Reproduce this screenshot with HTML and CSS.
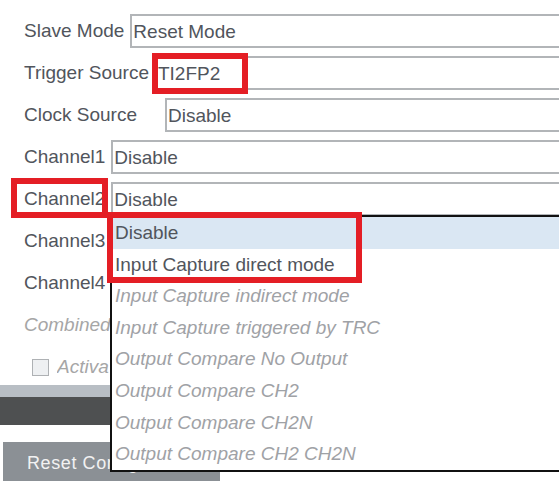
FILE: index.html
```html
<!DOCTYPE html>
<html>
<head>
<meta charset="utf-8">
<link rel="stylesheet" href="styles.css">
</head>
<body>
<div class="page">
  <div class="form">
    <div class="row"><span class="label">Slave Mode</span><div class="select">Reset Mode</div></div>
    <div class="row"><span class="label">Trigger Source</span><div class="select">TI2FP2</div></div>
    <div class="row"><span class="label">Clock Source</span><div class="select select--wide">Disable</div></div>
    <div class="row"><span class="label">Channel1</span><div class="select">Disable</div></div>
    <div class="row"><span class="label">Channel2</span><div class="select">Disable</div></div>
    <div class="row row--under"><span class="label label--clip">Channel3</span><div class="select"></div></div>
    <div class="row row--under"><span class="label label--clip">Channel4</span><div class="select"></div></div>
    <div class="row row--under"><span class="label label--off label--clip">Combined Channels</span><div class="select select--off"></div></div>
    <div class="row row--check"><span class="checkbox"></span><span class="label label--off label--clip-check">Activate-Clock</span></div>
  </div>
  <div class="strip"></div>
  <div class="bar"></div>
  <div class="actions"><div class="button">Reset Configuration</div></div>

  <ul class="dropdown">
    <li class="item item--selected">Disable</li>
    <li class="item">Input Capture direct mode</li>
    <li class="item item--off">Input Capture indirect mode</li>
    <li class="item item--off">Input Capture triggered by TRC</li>
    <li class="item item--off">Output Compare No Output</li>
    <li class="item item--off">Output Compare CH2</li>
    <li class="item item--off">Output Compare CH2N</li>
    <li class="item item--off">Output Compare CH2 CH2N</li>
  </ul>

  <div class="mark mark--trigger"></div>
  <div class="mark mark--channel"></div>
  <div class="mark mark--list"></div>
</div>
</body>
</html>
```
FILE: styles.css
```css
html, body {
  margin: 0;
  padding: 0;
  background: #ffffff;
  overflow: hidden;
}

.page {
  position: relative;
  width: 640px;
  height: 481px;
  font-family: "Liberation Sans", Arial, sans-serif;
  font-size: 19px;
  color: #51555c;
}

.form {
  display: flex;
  flex-direction: column;
  gap: 8px;
  padding-top: 14px;
}

.row {
  display: flex;
  align-items: center;
  gap: 6px;
  height: 34px;
  padding-left: 24px;
}

.label {
  white-space: nowrap;
  flex: none;
}

.label--clip {
  width: 86px;
  overflow: hidden;
}

.label--clip-check {
  width: 52px;
  overflow: hidden;
}

.label--off {
  color: #a6a6a6;
  font-style: italic;
}

.select {
  flex: 1;
  height: 34px;
  box-sizing: border-box;
  border: 2px solid #b2b5b8;
  border-right: none;
  padding-left: 1px;
  display: flex;
  align-items: center;
  line-height: 1;
}

.row--under .select {
  margin-left: 0;
}

.select--wide {
  margin-left: 22px;
}

.select--off {
  color: #a6a6a6;
}

.row--check {
  padding-left: 32px;
  gap: 8px;
}

.checkbox {
  width: 17px;
  height: 17px;
  box-sizing: border-box;
  border: 1.5px solid #aeb1b4;
  background: #eef0f2;
  flex: none;
}

.strip {
  margin-top: 1px;
  height: 12px;
  background: #b8bec4;
}

.bar {
  height: 28px;
  background: #4e5051;
}

.actions {
  padding: 17px 0 0 3px;
}

.button {
  width: 217px;
  height: 44px;
  background: #8b9095;
  color: #f2f2f2;
  letter-spacing: 0.6px;
  font-size: 18px;
  padding: 11px 0 0 24px;
  box-sizing: border-box;
  white-space: nowrap;
  overflow: hidden;
}

.dropdown {
  position: absolute;
  left: 110px;
  top: 215px;
  width: 520px;
  margin: 0;
  padding: 0;
  list-style: none;
  background: #ffffff;
  border: 2px solid #111111;
  box-sizing: border-box;
  height: 257px;
}

.item {
  height: 31.6px;
  line-height: 31.6px;
  padding-left: 3px;
  white-space: nowrap;
  color: #51555c;
}

.item--selected {
  background: #dae7f3;
}

.item--off {
  color: #9fa2a6;
  font-style: italic;
}

.mark {
  position: absolute;
  border: 6px solid #e41e25;
  box-sizing: border-box;
}

.mark--trigger {
  left: 152px;
  top: 53px;
  width: 96px;
  height: 41px;
}

.mark--channel {
  left: 11px;
  top: 178px;
  width: 97px;
  height: 40px;
}

.mark--list {
  left: 107px;
  top: 212px;
  width: 255px;
  height: 71px;
}
```
